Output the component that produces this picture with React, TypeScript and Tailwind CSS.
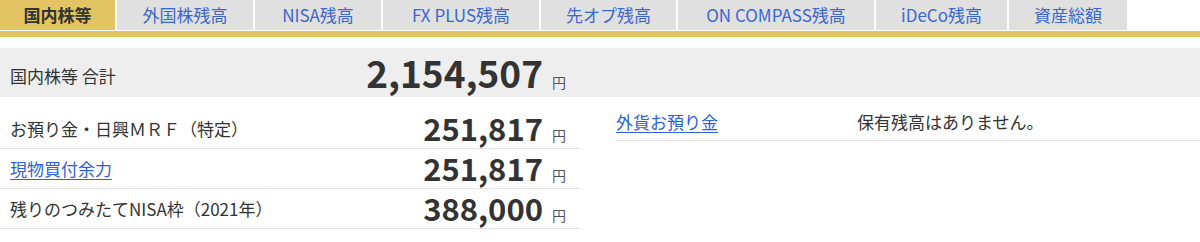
import React from "react";

const tabs: { t: string; w: string }[] = [
  { t: "国内株等", w: "w-[115px]" },
  { t: "外国株残高", w: "w-[136px]" },
  { t: "NISA残高", w: "w-[126px]" },
  { t: "FX PLUS残高", w: "w-[156px]" },
  { t: "先オプ残高", w: "w-[135px]" },
  { t: "ON COMPASS残高", w: "w-[196px]" },
  { t: "iDeCo残高", w: "w-[131px]" },
  { t: "資産総額", w: "w-[118px]" },
];

function Row({ label, amount, link, first }: { label: string; amount: string; link?: boolean; first?: boolean }) {
  return (
    <div className={`flex items-center justify-between border-b border-[#e5e5e5] pl-[10px] pr-[14px] ${first ? "h-[52px] pt-[12px]" : "h-[40px]"}`}>
      {link ? (
        <a href="#" className="text-[#2f62d6] underline underline-offset-[3px]">{label}</a>
      ) : (
        <span className="text-[#333]">{label}</span>
      )}
      <span className="flex items-baseline">
        <span className="text-[31px] font-bold text-[#333] leading-[32px]">{amount}</span>
        <span className="ml-[9px] text-[14px] text-[#555]">円</span>
      </span>
    </div>
  );
}

export default function App() {
  return (
    <div className="w-[1200px] h-[242px] bg-white text-[17px] font-['Noto_Sans_CJK_JP','Noto_Sans',sans-serif]">
      <div className="flex h-[30px] gap-[2px]">
        {tabs.map(({ t, w }, i) => (
          <div
            key={t}
            className={`flex shrink-0 items-center justify-center whitespace-nowrap ${w} ${i === 0 ? "bg-[#e3c462] text-[#333] font-bold" : "bg-[#e0e0e0] text-[#3b67d0]"}`}
          >
            {t}
          </div>
        ))}
      </div>
      <div className="mt-[1px] h-[6px] bg-[#e3c462]" />
      <div className="h-[11px]" />
      <div className="flex h-[49px] items-center bg-[#eeeeee]">
        <div className="flex w-[580px] items-center justify-between pl-[10px] pr-[14px]">
          <span className="pt-[6px] text-[#333]">国内株等 合計</span>
          <span className="flex items-baseline">
            <span className="text-[37px] font-bold text-[#333] leading-[40px]">2,154,507</span>
            <span className="ml-[9px] text-[14px] text-[#555]">円</span>
          </span>
        </div>
      </div>
      <div className="flex">
        <div className="w-[580px]">
          <Row label="お預り金・日興ＭＲＦ（特定）" amount="251,817" first />
          <Row label="現物買付余力" amount="251,817" link />
          <Row label="残りのつみたてNISA枠（2021年）" amount="388,000" />
        </div>
        <div className="ml-[35px] flex-1">
          <div className="flex h-[44px] items-end border-b border-[#e5e5e5] pb-[6px]">
            <a href="#" className="w-[242px] pl-[1px] text-[#2f62d6] underline underline-offset-[3px]">外貨お預り金</a>
            <span className="text-[#333]">保有残高はありません。</span>
          </div>
        </div>
      </div>
    </div>
  );
}
